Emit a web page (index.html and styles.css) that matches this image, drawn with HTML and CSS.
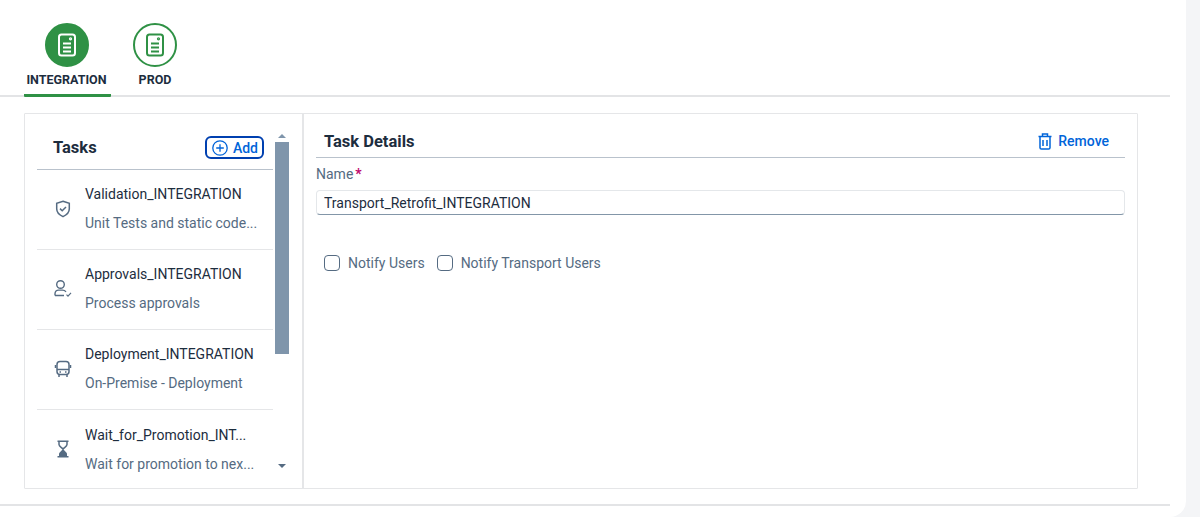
FILE: index.html
```html
<!DOCTYPE html>
<html lang="en">

<head>
    <meta charset="UTF-8">
    <meta name="viewport" content="width=device-width, initial-scale=1.0">
    <title>Stage Tasks</title>
    <link rel="stylesheet" href="styles.css">
</head>

<body>
    <div class="page">
        <div class="stages">
            <div class="stage stage-active">
                <span class="stage-icon">
                    <svg width="24" height="24" viewBox="0 0 24 24" fill="none" stroke="currentColor" stroke-width="2">
                        <rect x="4" y="1.500" width="16" height="21" rx="2.500" />
                        <path d="M8 10.500h8M8 14.500h8M8 18.500h8" />
                        <circle cx="15.500" cy="5.800" r="0.600" />
                    </svg>
                </span>
                <span class="stage-label">INTEGRATION</span>
            </div>
            <div class="stage">
                <span class="stage-icon">
                    <svg width="24" height="24" viewBox="0 0 24 24" fill="none" stroke="currentColor" stroke-width="2">
                        <rect x="4" y="1.500" width="16" height="21" rx="2.500" />
                        <path d="M8 10.500h8M8 14.500h8M8 18.500h8" />
                        <circle cx="15.500" cy="5.800" r="0.600" />
                    </svg>
                </span>
                <span class="stage-label">PROD</span>
            </div>
        </div>

        <div class="card">
            <div class="tasks-pane">
                <div class="tasks-list">
                    <div class="tasks-head">
                        <h2>Tasks</h2>
                        <button class="add-btn">
                            <svg width="16" height="16" viewBox="0 0 16 16" fill="none" stroke="currentColor" stroke-width="1.300">
                                <circle cx="8" cy="8" r="7.200" />
                                <path d="M8 4.200v7.600M4.200 8h7.600" />
                            </svg>
                            Add
                        </button>
                    </div>

                    <div class="task">
                        <svg class="task-icon" width="16" height="18" viewBox="0 0 16 18" fill="none" stroke="currentColor" stroke-width="1.500">
                            <path d="M8 1.200l6.300 2.200v5.400c0 3.600-2.600 6.200-6.300 7.800-3.700-1.600-6.300-4.200-6.300-7.800V3.400z" />
                            <path d="M5 8.600l2.200 2.200L11 7" />
                        </svg>
                        <div class="task-text">
                            <div class="task-name">Validation_INTEGRATION</div>
                            <div class="task-desc">Unit Tests and static code...</div>
                        </div>
                    </div>
                    <div class="task">
                        <svg class="task-icon" width="18" height="18" viewBox="0 0 18 18" fill="none" stroke="currentColor" stroke-width="1.400">
                            <circle cx="6.500" cy="4.500" r="3.800" />
                            <path d="M1 15.500v-1.800c0-2.200 1.600-3.600 3.600-3.600h3.800c1.500 0 2.800.6 3.600 1.700M1 15.500h9" />
                            <path d="M12.500 14.600l1.500 1.500 3-3.200" stroke-width="1.200" />
                        </svg>
                        <div class="task-text">
                            <div class="task-name">Approvals_INTEGRATION</div>
                            <div class="task-desc">Process approvals</div>
                        </div>
                    </div>
                    <div class="task">
                        <svg class="task-icon" width="18" height="18" viewBox="0 0 18 18" fill="none" stroke="currentColor" stroke-width="1.500">
                            <rect x="3" y="1.500" width="12" height="13" rx="3" />
                            <path d="M3 9.500h12M1.500 5v3M16.500 5v3M5 14.500v2.500M13 14.500v2.500M5.500 12h1.500M11 12h1.500" />
                        </svg>
                        <div class="task-text">
                            <div class="task-name">Deployment_INTEGRATION</div>
                            <div class="task-desc">On-Premise - Deployment</div>
                        </div>
                    </div>
                    <div class="task">
                        <svg class="task-icon" width="14" height="18" viewBox="0 0 14 18" fill="currentColor">
                            <path d="M1.500 1.200h11M1.500 16.800h11" stroke="currentColor" stroke-width="1.500" />
                            <path d="M3 2v2.500c0 2 2.700 3 4 4.500 1.300-1.500 4-2.500 4-4.500V2" fill="none" stroke="currentColor" stroke-width="1.500" />
                            <path d="M7 9l-4 4.300V16h8v-2.700z" />
                        </svg>
                        <div class="task-text">
                            <div class="task-name">Wait_for_Promotion_INT...</div>
                            <div class="task-desc">Wait for promotion to nex...</div>
                        </div>
                    </div>
                </div>

                <div class="scrollbar">
                    <span class="arrow-up"></span>
                    <span class="thumb"></span>
                    <span class="arrow-down"></span>
                </div>
            </div>

            <div class="details-pane">
                <div class="details-head">
                    <h2>Task Details</h2>
                    <button class="remove-btn">
                        <svg width="14" height="17" viewBox="0 0 14 17" fill="none" stroke="currentColor" stroke-width="1.500">
                            <path d="M0.500 3.500h13M4.500 3.500V1h5v2.500" />
                            <path d="M2 3.500v11.200c0 .8.600 1.400 1.400 1.400h7.200c.8 0 1.400-.6 1.400-1.400V3.500" />
                            <path d="M5 7v6M9 7v6" />
                        </svg>
                        Remove
                    </button>
                </div>
                <label class="field-label">Name<span class="required">*</span></label>
                <input class="name-input" type="text" value="Transport_Retrofit_INTEGRATION">
                <div class="checks">
                    <label class="check"><span class="box"></span>Notify Users</label>
                    <label class="check"><span class="box"></span>Notify Transport Users</label>
                </div>
            </div>
        </div>

        <div class="footer-line"></div>
    </div>
</body>

</html>
```

FILE: styles.css
```css
* {
    box-sizing: border-box;
}

html,
body {
    height: 100%;
}

body {
    margin: 0;
    overflow: hidden;
    background-color: #f4f5f7;
    color: #1d2d3e;
    font-family: Roboto, "Liberation Sans", Arial, sans-serif;
    font-size: 14px;
}

.page {
    width: 1186px;
    height: 517px;
    padding-right: 16px;
    background-color: #fff;
    border-bottom-right-radius: 16px;
}

.stages {
    display: flex;
    gap: 19px;
    height: 97px;
    padding: 23px 0 0 24px;
    border-bottom: 2px solid #e3e4e6;
}

.stage {
    display: flex;
    flex-direction: column;
    align-items: center;
    height: 74px;
    padding: 0 3px;
}

.stage-active {
    width: 87px;
    padding: 0 4px 0 2px;
    border-bottom: 3px solid #2f9145;
    border-radius: 0 0 1px 1px;
}

.stage-icon {
    display: flex;
    align-items: center;
    justify-content: center;
    width: 44px;
    height: 44px;
    border: 2px solid #2f9145;
    border-radius: 50%;
    color: #2f9145;
}

.stage-active .stage-icon {
    background-color: #2f9145;
    color: #fff;
}

.stage-label {
    margin-top: 5px;
    font-size: 12.5px;
    font-weight: 700;
    line-height: 16px;
}

.card {
    display: flex;
    width: 1114px;
    height: 376px;
    margin: 16px 0 15px 24px;
    border: 1px solid #e5e6e8;
    border-radius: 1px;
}

.tasks-pane {
    display: flex;
    flex: none;
    width: 279px;
    height: 374px;
    padding-left: 12px;
    border-right: 2px solid #e5e6e8;
}

.tasks-list {
    width: 236px;
}

.tasks-head {
    display: flex;
    align-items: center;
    justify-content: space-between;
    height: 56px;
    padding: 12px 9px 0 16px;
    border-bottom: 1px solid #b9c2cc;
}

.tasks-head h2,
.details-head h2 {
    margin: 0;
    font-size: 16.5px;
    font-weight: 700;
}

.add-btn {
    display: flex;
    align-items: center;
    gap: 5px;
    height: 23px;
    padding: 0 4px 0 5px;
    background: #fff;
    border: 2px solid #0040b0;
    border-radius: 6px;
    color: #0064d9;
    font-family: inherit;
    font-size: 14px;
    font-weight: 500;
}

.task {
    display: flex;
    align-items: center;
    height: 80px;
    padding-bottom: 2px;
    border-bottom: 1px solid #e5e6e8;
}

.task:last-child {
    border-bottom: none;
}

.task-icon {
    flex: none;
    width: 18px;
    margin-left: 17px;
    color: #556b82;
}

.task-text {
    margin-left: 13px;
    white-space: nowrap;
}

.task-name {
    line-height: 20px;
    margin-bottom: 9px;
}

.task-desc {
    color: #556b82;
    line-height: 20px;
}

.scrollbar {
    display: flex;
    flex-direction: column;
    align-items: center;
    width: 14px;
    margin-left: 2px;
    padding-top: 20px;
}

.thumb {
    width: 14px;
    height: 212px;
    margin-top: 4px;
    background-color: #7f95ab;
}

.arrow-up,
.arrow-down {
    width: 0;
    height: 0;
    border-left: 4px solid transparent;
    border-right: 4px solid transparent;
}

.arrow-up {
    border-bottom: 4px solid #7f95ab;
}

.arrow-down {
    margin-top: 110px;
    border-top: 4px solid #556b82;
}

.details-pane {
    flex: 1;
    padding: 0 12px;
}

.details-head {
    display: flex;
    align-items: center;
    justify-content: space-between;
    height: 44px;
    padding: 11px 16px 0 8px;
    border-bottom: 1px solid #b9c2cc;
}

.remove-btn {
    display: flex;
    align-items: center;
    gap: 6px;
    padding: 0;
    background: none;
    border: none;
    color: #0064d9;
    font-family: inherit;
    font-size: 14px;
    font-weight: 500;
}

.field-label {
    display: block;
    margin-top: 6px;
    color: #556b82;
    line-height: 20px;
}

.required {
    margin-left: 2px;
    color: #c0086e;
    font-weight: 700;
}

.name-input {
    display: block;
    width: 100%;
    height: 25px;
    margin-top: 6px;
    padding: 0 7px;
    border: 1px solid #e4e7ea;
    border-bottom: 1px solid #8396a8;
    border-radius: 4px;
    color: #1d2d3e;
    font-family: inherit;
    font-size: 14px;
}

.checks {
    display: flex;
    gap: 12px;
    margin-top: 38px;
    padding-left: 8px;
}

.check {
    display: flex;
    align-items: center;
    gap: 8px;
    color: #556b82;
    line-height: 20px;
}

.box {
    width: 16px;
    height: 16px;
    background: #fff;
    border: 1px solid #556b82;
    border-radius: 4px;
}

.footer-line {
    height: 2px;
    background-color: #e3e4e6;
}
```
